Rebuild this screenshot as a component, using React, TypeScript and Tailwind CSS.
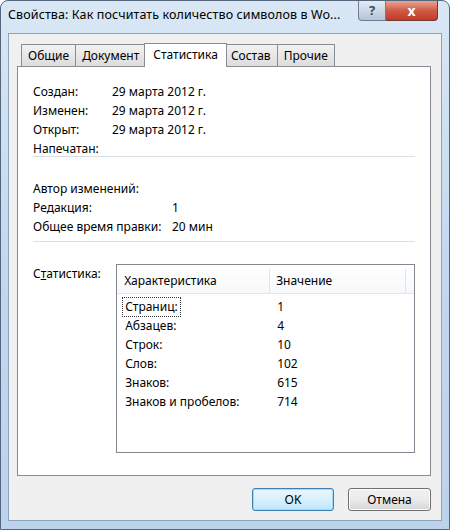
import React from "react";

const font = { fontFamily: '"Noto Sans", "Open Sans", sans-serif' };

const dates = [
  ["Создан:", "29 марта 2012 г."],
  ["Изменен:", "29 марта 2012 г."],
  ["Открыт:", "29 марта 2012 г."],
  ["Напечатан:", ""],
];

const edits = [
  ["Автор изменений:", ""],
  ["Редакция:", "1"],
  ["Общее время правки:", "20 мин"],
];

const stats = [
  ["Страниц:", "1"],
  ["Абзацев:", "4"],
  ["Строк:", "10"],
  ["Слов:", "102"],
  ["Знаков:", "615"],
  ["Знаков и пробелов:", "714"],
];

const tabs = ["Общие", "Документ", "Статистика", "Состав", "Прочие"];

function Tab({ label, active }: { label: string; active: boolean }) {
  if (active) {
    return (
      <div className="relative z-10 -mx-[2px] mb-[-1px] flex h-[24px] items-start border border-b-0 border-[#898c95] bg-white px-[8px] pt-[2px]">
        {label}
      </div>
    );
  }
  return (
    <div className="flex h-[22px] items-center border border-b-0 border-l-0 border-[#898c95] bg-gradient-to-b from-[#f2f2f2] to-[#dcdcdc] px-[6px] pt-[1px] first:border-l">
      {label}
    </div>
  );
}

export default function App() {
  return (
    <div
      style={font}
      className="relative h-[530px] w-[450px] overflow-hidden rounded-t-[8px] border border-[#54667c] bg-gradient-to-b from-[#d9e7f5] via-[#c3d8ef] to-[#bcd3ec] text-[12px] text-black"
    >
      {/* title bar */}
      <div className="flex h-[32px] items-start">
        <div className="pl-[7px] pt-[5px] text-[12.5px] tracking-[0.1px] text-black">
          Свойства: Как посчитать количество символов в Wo...
        </div>
        <div className="ml-auto mr-[11px] flex">
          <div className="flex h-[20px] w-[28px] items-center justify-center rounded-bl-[4px] border border-t-0 border-[#6d7f95] bg-gradient-to-b from-[#e4ecf5] to-[#b3c4d8] text-[13px] font-bold text-[#3c4b5d]">
            ?
          </div>
          <div className="flex h-[20px] w-[52px] items-center justify-center rounded-br-[4px] border border-l-0 border-t-0 border-[#6d3b33] bg-gradient-to-b from-[#e8a595] via-[#cf5a45] to-[#c23a25] text-[14px] font-bold leading-none text-white">
            x
          </div>
        </div>
      </div>

      {/* client area */}
      <div className="mx-[7px] h-[488px] border border-[#8ea3bd] bg-[#f0f0f0] pl-[8px] pr-[10px] pt-[10px]">
        <div className="flex h-[22px] items-end pl-[4px]">
          {tabs.map((t) => (
            <Tab key={t} label={t} active={t === "Статистика"} />
          ))}
        </div>
        <div className="h-[410px] border border-[#898c95] bg-white pl-[15px] pr-[15px] pt-[15px]">
          <div className="grid grid-cols-[79px_1fr] leading-[19px]">
            {dates.map(([a, b]) => (
              <React.Fragment key={a}>
                <div>{a}</div>
                <div>{b}</div>
              </React.Fragment>
            ))}
          </div>
          <div className="mt-[-2px] h-[2px] border-t border-b border-t-[#d5dfe5] border-b-white" />
          <div className="mt-[21px] grid grid-cols-[139px_1fr] leading-[19px]">
            {edits.map(([a, b]) => (
              <React.Fragment key={a}>
                <div>{a}</div>
                <div>{b}</div>
              </React.Fragment>
            ))}
          </div>
          <div className="mt-[5px] h-[2px] border-t border-b border-t-[#d5dfe5] border-b-white" />

          <div className="mt-[21px] flex">
            <div className="w-[84px] leading-[19px]">
              С<span className="underline">т</span>атистика:
            </div>
            <div className="h-[189px] w-[302px] border border-[#828790] bg-white">
              <div className="flex h-[29px] items-center border-b border-[#e5e5e5] bg-gradient-to-b from-white to-[#f7f8fa] pt-[4px]">
                <div className="flex h-full w-[153px] items-center border-r border-[#e0e3e8] pl-[7px]">
                  Характеристика
                </div>
                <div className="flex h-full w-[136px] items-center border-r border-[#e0e3e8] pl-[6px]">
                  Значение
                </div>
              </div>
              <div className="pt-[3px]">
                {stats.map(([a, b], i) => (
                  <div key={a} className="flex h-[19px] items-center">
                    <div className="w-[160px] pl-[5px]">
                      <span
                        className={
                          i === 0
                            ? "inline-block h-[20px] border border-dotted border-[#333] px-[2px] leading-[18px]"
                            : "inline-block px-[3px]"
                        }
                      >
                        {a}
                      </span>
                    </div>
                    <div>{b}</div>
                  </div>
                ))}
              </div>
            </div>
          </div>
        </div>

        <div className="mt-[12px] flex justify-end gap-[14px]">
          <button className="h-[23px] w-[82px] rounded-[3px] border border-[#3c7fb1] bg-gradient-to-b from-[#eaf6fd] via-[#d9f0fc] to-[#bee6fd] shadow-[inset_0_0_0_1px_#9fdcf8]">
            OK
          </button>
          <button className="h-[23px] w-[83px] rounded-[3px] border border-[#707070] bg-gradient-to-b from-[#f2f2f2] via-[#ebebeb] to-[#d6d6d6] shadow-[inset_0_0_0_1px_#fcfcfc]">
            Отмена
          </button>
        </div>
      </div>
    </div>
  );
}
